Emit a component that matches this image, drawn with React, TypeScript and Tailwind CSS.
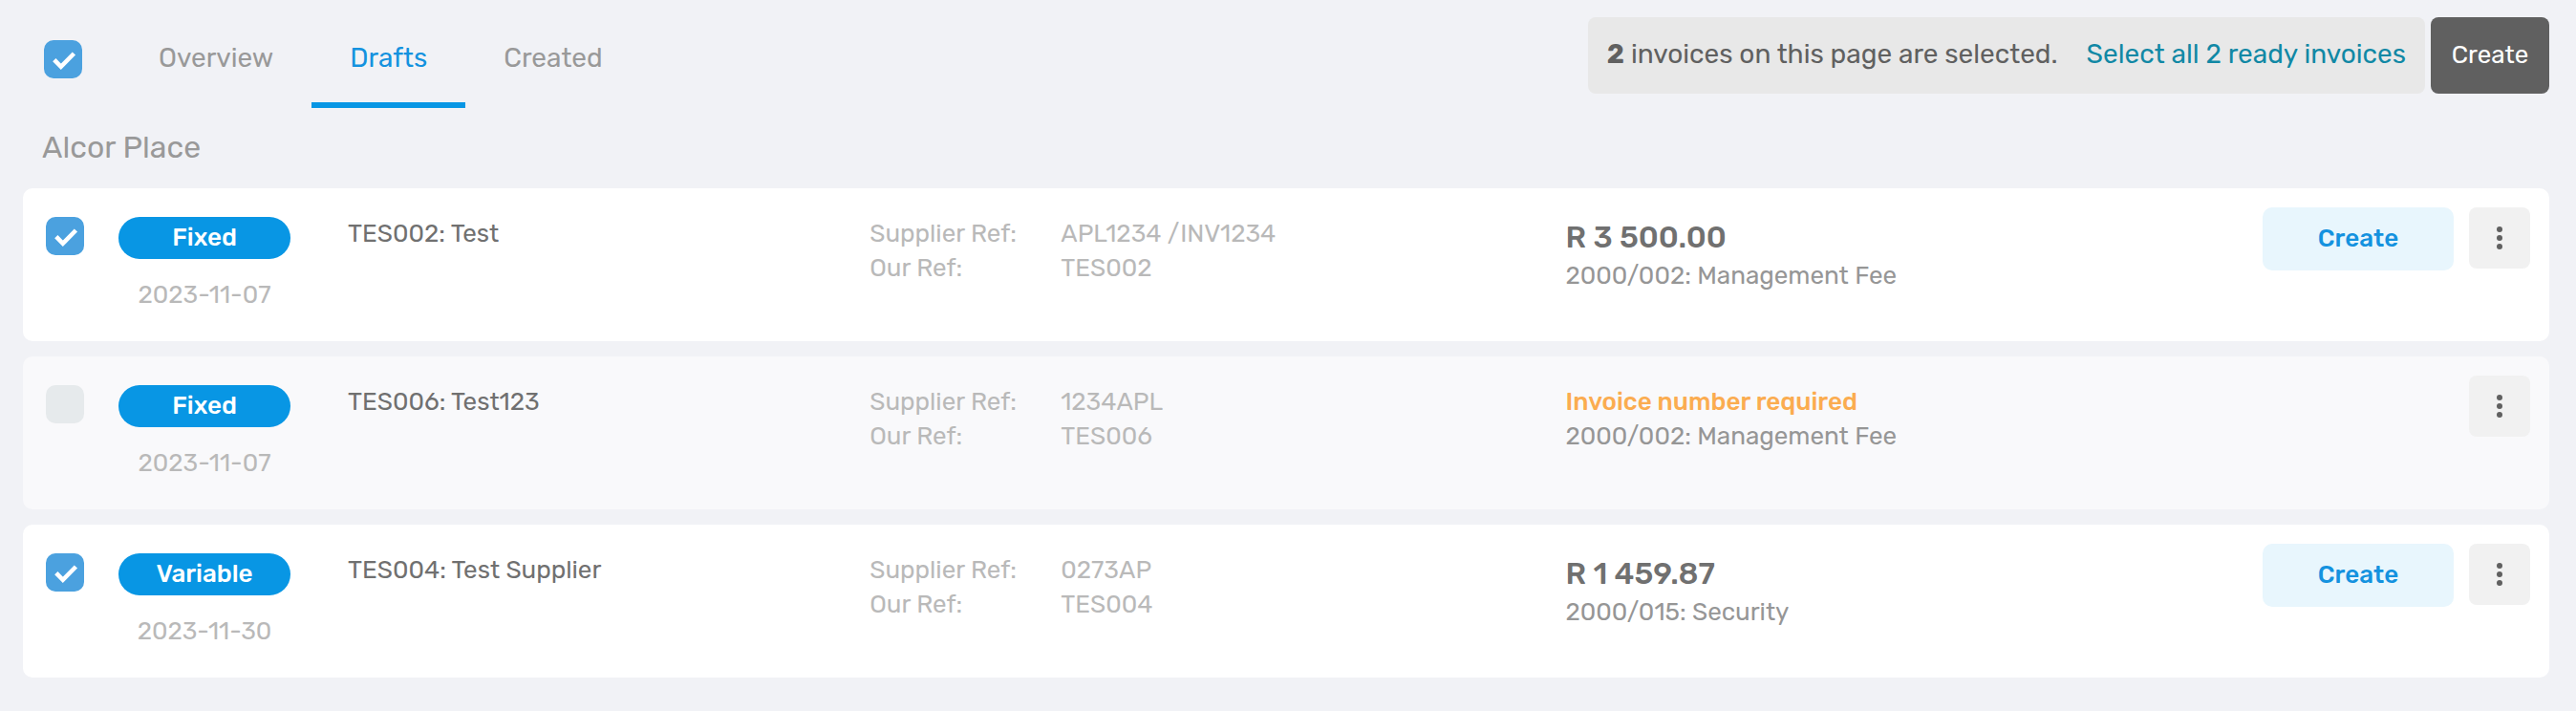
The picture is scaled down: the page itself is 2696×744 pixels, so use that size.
import { useState } from 'react';
import clsx from 'clsx';

interface Invoice {
  id: number;
  type: 'Fixed' | 'Variable';
  date: string;
  supplier: string;
  supplierRef: string;
  ourRef: string;
  amount: string | null;
  account: string;
}

const tabs = ['Overview', 'Drafts', 'Created'];

const invoices: Invoice[] = [
  {
    id: 1,
    type: 'Fixed',
    date: '2023-11-07',
    supplier: 'TES002: Test',
    supplierRef: 'APL1234 /INV1234',
    ourRef: 'TES002',
    amount: 'R 3 500.00',
    account: '2000/002: Management Fee',
  },
  {
    id: 2,
    type: 'Fixed',
    date: '2023-11-07',
    supplier: 'TES006: Test123',
    supplierRef: '1234APL',
    ourRef: 'TES006',
    amount: null, // no invoice number yet
    account: '2000/002: Management Fee',
  },
  {
    id: 3,
    type: 'Variable',
    date: '2023-11-30',
    supplier: 'TES004: Test Supplier',
    supplierRef: '0273AP',
    ourRef: 'TES004',
    amount: 'R 1 459.87',
    account: '2000/015: Security',
  },
];

const readyIds = invoices.filter((invoice) => invoice.amount).map((invoice) => invoice.id);

interface CheckboxProps {
  label: string;
  checked: boolean;
  disabled?: boolean;
  onChange: () => void;
}

function Checkbox({ label, checked, disabled, onChange }: CheckboxProps) {
  return (
    <label className="grid size-10 shrink-0">
      <input
        type="checkbox"
        aria-label={label}
        checked={checked}
        disabled={disabled}
        onChange={onChange}
        className="col-start-1 row-start-1 size-10 appearance-none rounded-[10px] bg-[#e6eaec] checked:bg-[#4ba1df]"
      />
      {checked && (
        <svg viewBox="0 0 40 40" className="pointer-events-none col-start-1 row-start-1 size-10" fill="none">
          <path d="M10.8 20.6 17.8 27.8 31.4 14" stroke="#fff" strokeWidth="4.6" />
        </svg>
      )}
    </label>
  );
}

interface InvoiceRowProps {
  invoice: Invoice;
  selected: boolean;
  onToggle: () => void;
}

function InvoiceRow({ invoice, selected, onToggle }: InvoiceRowProps) {
  const ready = invoice.amount !== null;

  return (
    <li
      className={clsx(
        'flex min-h-40 items-start rounded-[10px] pt-5 pr-5 pl-6 text-[26px] leading-9',
        ready ? 'bg-white' : 'bg-[#f9f9fb]'
      )}
    >
      <div className="pt-[10px]">
        <Checkbox
          label={`Select ${invoice.supplier}`}
          checked={selected}
          disabled={!ready}
          onChange={onToggle}
        />
      </div>
      <div className="ml-9 flex w-[180px] shrink-0 flex-col gap-5 pt-[10px] text-center">
        <span className="rounded-full bg-[#0896e4] py-1 font-medium text-white">{invoice.type}</span>
        <time className="text-[#b9b9b9]">{invoice.date}</time>
      </div>
      <div className="ml-[60px] grid flex-1 grid-cols-[546fr_728fr_1009fr] items-start">
        <p className="pt-[10px] text-[#707070]">{invoice.supplier}</p>
        <dl className="grid grid-cols-[200px_1fr] pt-[10px] text-[#b9b9b9]">
          <dt>Supplier Ref:</dt>
          <dd>{invoice.supplierRef}</dd>
          <dt>Our Ref:</dt>
          <dd>{invoice.ourRef}</dd>
        </dl>
        <div className="flex items-start justify-between">
          <div className="pt-[10px]">
            {ready ? (
              <p className="pb-0.5 text-[32px] leading-[42px] font-medium text-[#707070]">{invoice.amount}</p>
            ) : (
              <p className="font-medium text-[#fbac50]">Invoice number required</p>
            )}
            <p className="text-[#969696]">{invoice.account}</p>
          </div>
          <div className="flex gap-4">
            {ready && (
              <button type="button" className="h-[66px] w-[200px] rounded-[10px] bg-[#e8f6fd] font-medium text-[#1492df]">
                Create
              </button>
            )}
            <button
              type="button"
              aria-label="More actions"
              className="flex size-16 items-center justify-center rounded-lg bg-[#f1f1f1]"
            >
              <svg viewBox="0 0 6 24" className="h-6 w-1.5" fill="#606060">
                <circle cx="3" cy="3" r="3" />
                <circle cx="3" cy="12" r="3" />
                <circle cx="3" cy="21" r="3" />
              </svg>
            </button>
          </div>
        </div>
      </div>
    </li>
  );
}

export default function App() {
  const [activeTab, setActiveTab] = useState('Drafts');
  const [selectedIds, setSelectedIds] = useState<number[]>(readyIds);

  const allSelected = selectedIds.length === readyIds.length;

  const toggleInvoice = (id: number) => {
    setSelectedIds(
      selectedIds.includes(id) ? selectedIds.filter((selected) => selected !== id) : [...selectedIds, id]
    );
  };

  return (
    <main className="min-h-screen bg-[#f1f2f6] pr-7 pb-9 pl-6 font-[Rubik,Roboto,sans-serif]">
      <header className="flex items-start justify-between text-[28px]">
        <div className="flex items-start pl-[22px]">
          <div className="pt-[42px]">
            <Checkbox
              label="Select all invoices"
              checked={allSelected}
              onChange={() => setSelectedIds(allSelected ? [] : readyIds)}
            />
          </div>
          <nav className="ml-10 flex">
            {tabs.map((tab) => (
              <button
                key={tab}
                type="button"
                onClick={() => setActiveTab(tab)}
                className={clsx(
                  'border-b-6 px-10 pt-[41px] pb-[26px] leading-10',
                  tab === activeTab ? 'border-[#0896e4] text-[#1492df]' : 'border-transparent text-[#999]'
                )}
              >
                {tab}
              </button>
            ))}
          </nav>
        </div>
        <div className="flex gap-1.5 pt-[18px]">
          <p className="flex h-20 items-center gap-[30px] rounded-lg bg-[#e8e8e8] px-5 pb-0.5 text-[#606060]">
            <span>
              <strong className="font-bold">{selectedIds.length}</strong> invoices on this page are selected.
            </span>
            <a href="#select-all" className="text-[#1188a5]">
              Select all {readyIds.length} ready invoices
            </a>
          </p>
          <button type="button" className="h-20 w-[124px] rounded-lg bg-[#606060] pb-0.5 text-[26px] text-white">
            Create
          </button>
        </div>
      </header>
      <h2 className="pt-[19px] pb-[21px] pl-5 text-[32px] leading-11 text-[#999]">Alcor Place</h2>
      <ul className="flex flex-col gap-4">
        {invoices.map((invoice) => (
          <InvoiceRow
            key={invoice.id}
            invoice={invoice}
            selected={selectedIds.includes(invoice.id)}
            onToggle={() => toggleInvoice(invoice.id)}
          />
        ))}
      </ul>
    </main>
  );
}
